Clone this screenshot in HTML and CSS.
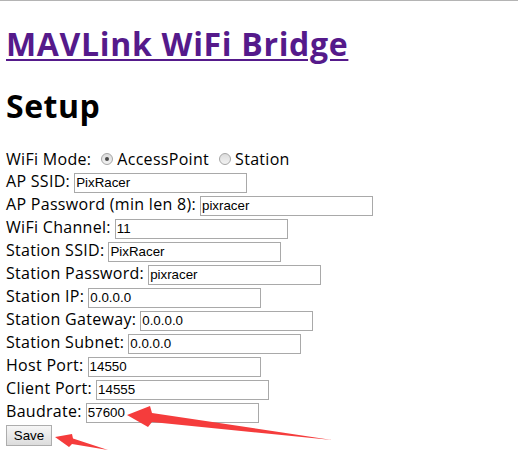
FILE: index.html
```html
<!DOCTYPE html>
<html>
<head>
<meta charset="utf-8">
<title>MAVLink WiFi Bridge</title>
<link rel="stylesheet" href="styles.css">
</head>
<body>
<h1 class="title"><a href="#" class="title-link">MAVLink WiFi Bridge</a></h1>
<h1 class="setup">Setup</h1>
<form class="form">
  <div class="row mode-row">
    <span class="label">WiFi Mode:</span>
    <label class="radio-opt"><input type="radio" name="mode" class="radio" checked><span>AccessPoint</span></label>
    <label class="radio-opt"><input type="radio" name="mode" class="radio"><span>Station</span></label>
  </div>
  <div class="row"><span class="label">AP SSID:</span><input class="field" type="text" value="PixRacer"></div>
  <div class="row"><span class="label">AP Password (min len 8):</span><input class="field" type="text" value="pixracer"></div>
  <div class="row"><span class="label">WiFi Channel:</span><input class="field" type="text" value="11"></div>
  <div class="row"><span class="label">Station SSID:</span><input class="field" type="text" value="PixRacer"></div>
  <div class="row"><span class="label">Station Password:</span><input class="field" type="text" value="pixracer"></div>
  <div class="row"><span class="label">Station IP:</span><input class="field" type="text" value="0.0.0.0"></div>
  <div class="row"><span class="label">Station Gateway:</span><input class="field" type="text" value="0.0.0.0"></div>
  <div class="row"><span class="label">Station Subnet:</span><input class="field" type="text" value="0.0.0.0"></div>
  <div class="row"><span class="label">Host Port:</span><input class="field" type="text" value="14550"></div>
  <div class="row"><span class="label">Client Port:</span><input class="field" type="text" value="14555"></div>
  <div class="row"><span class="label">Baudrate:</span><input class="field" type="text" value="57600"></div>
  <div class="row"><button type="button" class="save">Save</button></div>
</form>
<svg class="arrows" width="518" height="471" viewBox="0 0 518 471">
  <polygon class="arrow" points="127,415 150,406 152,413 332,440 152,422 148,427"/>
  <polygon class="arrow" points="55,437 72,434 73,438.5 108,450 72,444 69,447"/>
</svg>
</body>
</html>
```
FILE: styles.css
```css
html, body {
  margin: 0;
  padding: 0;
  background: #fff;
}
body {
  border-top: 1px solid #b4b4b4;
  padding-left: 6px;
  font-family: "Open Sans", "Noto Sans", sans-serif;
  font-size: 16px;
  color: #000;
  position: relative;
  height: 470px;
  overflow: hidden;
}
.title, .setup {
  font-size: 32px;
  font-weight: bold;
  line-height: 40px;
  margin: 0;
}
.title {
  margin-top: 23px;
  letter-spacing: 0.68px;
}
.title-link {
  color: #551a8b;
  text-decoration: underline;
  text-decoration-thickness: 2px;
  text-underline-offset: 3px;
}
.setup {
  margin-top: 22px;
  margin-bottom: 23px;
  letter-spacing: 0.5px;
}
.form {
  margin: 0;
}
.row {
  display: flex;
  align-items: center;
  height: 23px;
  gap: 4px;
}
.mode-row {
  height: 22px;
}
.label {
  line-height: 20px;
  padding-bottom: 3px;
  white-space: nowrap;
  letter-spacing: 0.3px;
}
.radio-opt {
  display: flex;
  align-items: center;
  gap: 4px;
  line-height: 20px;
  padding-bottom: 3px;
  margin-left: 6px;
  letter-spacing: 0.3px;
}
.radio {
  appearance: none;
  -webkit-appearance: none;
  width: 12px;
  height: 12px;
  margin: 1px 0 0;
  border: 1px solid #a6a6a6;
  border-radius: 50%;
  background: linear-gradient(#dcdcdc, #f2f2f2);
  position: relative;
  box-sizing: border-box;
}
.radio:checked::after {
  content: "";
  position: absolute;
  left: 3px;
  top: 3px;
  width: 4px;
  height: 4px;
  border-radius: 50%;
  background: #4a4a4a;
}
.field {
  box-sizing: border-box;
  width: 173px;
  height: 20px;
  margin: 0;
  padding: 0 1px;
  border: 1px solid #a9a9a9;
  font-family: "Liberation Sans", Arial, sans-serif;
  font-size: 13.33px;
  color: #000;
  background: #fff;
  outline: none;
}
.save {
  box-sizing: border-box;
  width: 46px;
  height: 21px;
  margin: 0;
  padding: 0;
  border: 1px solid #adadad;
  background: linear-gradient(#f6f6f6, #dcdcdc);
  font-family: "Liberation Sans", Arial, sans-serif;
  font-size: 13.33px;
  color: #000;
}
.arrows {
  position: absolute;
  left: 0;
  top: -1px;
  pointer-events: none;
}
.arrow {
  fill: #f53c3c;
}
```
